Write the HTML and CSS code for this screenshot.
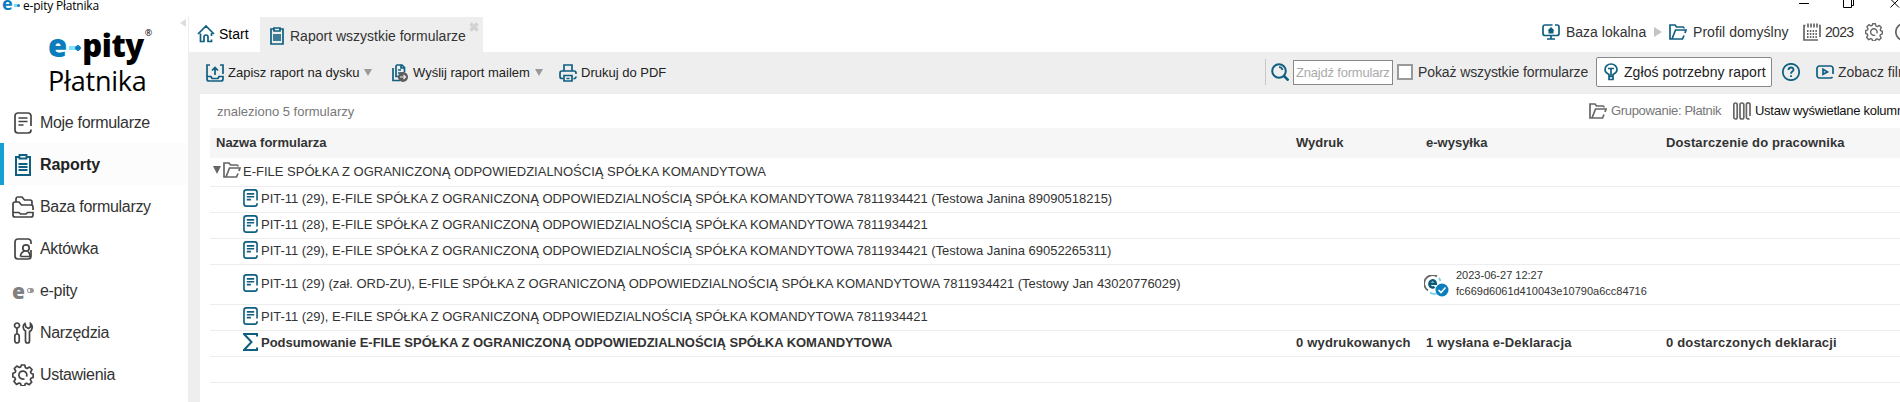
FILE: index.html
```
<!DOCTYPE html>
<html lang="pl">
<head>
  <meta charset="UTF-8">
  <title>e-pity Płatnika</title>
  <link rel="stylesheet" href="styles.css">
</head>
<body>

  <!-- Icon set -->
  <svg class="icon-set" width="0" height="0">
    <symbol id="doc" viewBox="0 0 18 22"><path d="M17 14V4a3 3 0 0 0-3-3H4a3 3 0 0 0-3 3v14a3 3 0 0 0 3 3h10a3 3 0 0 0 3-3v-.5M4.500 6h9M4.500 9.500h9M4.500 13h5"/></symbol>
    <symbol id="clipboard" viewBox="0 0 16 22"><path d="M4.500 3H1v18h14V3h-3.500" stroke-width="2"/><path d="M4.500 1h7v3.500h-7zM3.500 10h9M3.500 13h9M3.500 16h9" stroke-width="1.800"/></symbol>
    <symbol id="folders" viewBox="0 0 22 22"><path d="M1 12V8a2 2 0 0 1 2-2h4l2.500 3H19a2 2 0 0 1 2 2V14M4 6V3a2 2 0 0 1 2-2h4l2.500 3H18a2 2 0 0 1 2 2v3M1 12v7a2 2 0 0 0 2 2h16a2 2 0 0 0 2-2v-2.500h-5.500L14 18H8.500L7 16.500H1"/></symbol>
    <symbol id="person" viewBox="0 0 18 22"><path d="M17 6V4a3 3 0 0 0-3-3H4a3 3 0 0 0-3 3v14a3 3 0 0 0 3 3h10a3 3 0 0 0 3-3v-6"/><circle cx="12" cy="10" r="3.200"/><path d="M6.500 18.500c0-3 1.500-4.500 4-5.500M14 13.500c1.500 1 2 2.500 2 5H6.500"/></symbol>
    <symbol id="tools" viewBox="0 0 20 22"><circle cx="4" cy="3.500" r="2.500"/><path d="M4 6v6"/><rect x="1.800" y="12" width="4.400" height="9" rx="2.200"/><path d="M12 1.500c-2.500 1.500-2.500 6 .5 7.500v10a2 2 0 0 0 4 0V9.500c3.500-1.500 3.500-6 1-8V5l-2 1.500L12.800 5z"/></symbol>
    <symbol id="gear" viewBox="0 0 22 22"><path d="M9.300 1h3.400l.8 2.800 1.500.6 2.500-1.400 2.500 2.500-1.400 2.500.6 1.500 2 .5v3.400l-2.300.8-.6 1.500 1.400 2.500-2.500 2.500-2.500-1.400-1.500.6-.5 2H9.300l-.8-2.300-1.500-.6-2.500 1.400L2 17.500l1.400-2.500-.6-1.500-2-.5V9.300l2.300-.8.6-1.500L2.300 4.500l2.500-2.400 2.500 1.400 1.500-.6z" stroke-linejoin="round"/><path d="M12.500 14.700a4 4 0 1 1 2-2"/></symbol>
    <symbol id="home" viewBox="0 0 18 18"><path d="M1 9l8-8 8 8M3.500 8.500v8h3.500V12q0-2 2-2t2 2v4.500h3.500v-2M14.500 8v3"/></symbol>
    <symbol id="report" viewBox="0 0 14 18"><path d="M4 2H1v15h12V2h-3"/><path d="M4 1h6v3H4z"/><path d="M3 7h8v7H3z" fill="currentColor" fill-opacity=".8" stroke="none"/></symbol>
    <symbol id="save" viewBox="0 0 18 18"><path d="M4 1H1v14a2 2 0 0 0 2 2h12a2 2 0 0 0 2-2v-2.500h-4l-1 2H6l-1-2H1M14 1h3v9M9 11V4M6 6.500l3-3 3 3"/></symbol>
    <symbol id="send" viewBox="0 0 16 18"><path d="M12.500 8V3.500L10 1H5L4 2v10.500h4M9 1v3h3M1 4v12.500h7M6 6h3M6 9h5"/><circle cx="11" cy="13" r="5" fill="#5c5c5c" stroke="none"/><path d="M8 13h5.500M11.500 11l2 2-2 2" stroke="#eee" stroke-width="1.200"/></symbol>
    <symbol id="print" viewBox="0 0 18 18"><path d="M5 7V1h8v6M4 14.500H3a2 2 0 0 1-2-2V9a2 2 0 0 1 2-2h12a2 2 0 0 1 2 2v1M14.500 14.500a2 2 0 0 0 2.500-2M5 11.500h8V17H5zM7.500 14.500h3"/></symbol>
    <symbol id="search" viewBox="0 0 18 18"><circle cx="8" cy="8" r="6.800" stroke-width="2"/><path d="M13 13l4.500 4.500" stroke-width="2.500"/><path d="M8 4q3 .3 3.500 3"/></symbol>
    <symbol id="bulb" viewBox="0 0 14 18"><path d="M5 13v-1.500C3 10.500 1 9.500 1 6.500a6 5.500 0 0 1 12 0c0 3-2 4-4 5V13M4 5.500h6M7 5.500V13M5 13.500h4v3H5z"/></symbol>
    <symbol id="help" viewBox="0 0 18 18"><circle cx="9" cy="9" r="8.200"/><path d="M6.500 7c0-3.300 5-3.300 5-.3 0 2-2.500 1.800-2.500 4M9 12.200V14" stroke-width="1.800"/></symbol>
    <symbol id="video" viewBox="0 0 18 14"><path d="M17 9V3.500A2.500 2.500 0 0 0 14.500 1h-11A2.500 2.500 0 0 0 1 3.500v7A2.500 2.500 0 0 0 3.500 13h11a2.500 2.500 0 0 0 2-1"/><path d="M7 4.300v5L11.500 7z"/></symbol>
    <symbol id="monitor" viewBox="0 0 18 16"><path d="M10.500 1H3a2 2 0 0 0-2 2v6.500a2 2 0 0 0 2 2h12a2 2 0 0 0 2-2V3a2 2 0 0 0-2-2h-2M5 15h8M9 12v3"/><path d="M9 3L5.500 6.500h1V9.500h5v-3h1z" fill="currentColor" stroke="none"/></symbol>
    <symbol id="folder" viewBox="0 0 18 16"><path d="M4 15H1V1H6l1.500 2H14q1 0 1 1.500M3 15L6.500 6H17l-1 3M15 11.500L13.500 15H3"/></symbol>
    <symbol id="calendar" viewBox="0 0 18 18"><path d="M2.500 2.500H1V17h14M17 14V2.500h-1M5 .5v4M8 .5v4M11 .5v4M14 .5v4"/><path d="M4 8h11M4 11h11M4 14h11" stroke-width="2" stroke-dasharray="1.500 1.300"/></symbol>
    <symbol id="columns" viewBox="0 0 18 18"><rect x=".8" y="1" width="3.400" height="16" rx="1.700"/><rect x="7" y="1" width="3.800" height="16" rx="1.700"/><path d="M17 14V2.700a1.800 1.800 0 0 0-3.600 0v12.600a1.800 1.800 0 0 0 3 1.200"/></symbol>
    <symbol id="sum" viewBox="0 0 15 18"><path d="M14 3.500V1H1l7.500 8L1 17h13v-2.500"/></symbol>
  </svg>

  <!-- Title bar -->
  <header class="titlebar">
    <span class="title-logo">e<i></i><b></b></span>
    <span class="title-text">e-pity Płatnika</span>
    <svg class="window-buttons" width="101" height="10" viewBox="0 0 101 10" fill="none" stroke="#000"><path d="M0 3.500h10M45.500-.5h7v8h-8v-8zM52.500 5.500h2v-7M91.500 7.500L100-1M91.500-1L100 7.500"/></svg>
  </header>

  <div class="layout">

    <!-- Sidebar -->
    <nav class="sidebar">
      <span class="collapse"></span>
      <div class="brand">
        <div class="brand-top"><span class="brand-e">e</span><span class="brand-dot"></span><span class="brand-pity">pity</span><sup>®</sup></div>
        <div class="brand-bottom">Płatnika</div>
      </div>
      <a class="menu-item"><svg class="icon" width="18" height="22"><use href="#doc"/></svg>Moje formularze</a>
      <a class="menu-item active"><svg class="icon" width="16" height="22"><use href="#clipboard"/></svg>Raporty</a>
      <a class="menu-item"><svg class="icon" width="22" height="22"><use href="#folders"/></svg>Baza formularzy</a>
      <a class="menu-item"><svg class="icon" width="18" height="22"><use href="#person"/></svg>Aktówka</a>
      <a class="menu-item"><span class="epity-icon">e<i></i></span>e-pity</a>
      <a class="menu-item"><svg class="icon" width="20" height="22"><use href="#tools"/></svg>Narzędzia</a>
      <a class="menu-item"><svg class="icon" width="22" height="22"><use href="#gear"/></svg>Ustawienia</a>
    </nav>

    <main class="main">
      <!-- Tabs -->
      <div class="tabs">
        <a class="tab start"><svg class="icon teal" width="18" height="18"><use href="#home"/></svg>Start</a>
        <a class="tab current"><svg class="icon teal" width="14" height="18"><use href="#report"/></svg>Raport wszystkie formularze<svg class="close" width="10" height="10" viewBox="0 0 10 10"><path d="M1.500 1.500l7 7M8.500 1.500l-7 7" stroke="#d2d2d2" stroke-width="3.400"/></svg></a>
        <div class="context">
          <svg class="icon teal" width="18" height="16"><use href="#monitor"/></svg><span class="c-base">Baza lokalna</span>
          <span class="arrow"></span>
          <svg class="icon teal" width="18" height="16"><use href="#folder"/></svg><span class="c-profile">Profil domyślny</span>
          <svg class="icon grey" width="18" height="18"><use href="#calendar"/></svg><span class="c-year">2023</span>
          <svg class="icon grey" width="18" height="18"><use href="#gear"/></svg>
          <svg class="icon grey c-help" width="18" height="18"><use href="#help"/></svg>
        </div>
      </div>

      <!-- Toolbar -->
      <div class="toolbar">
        <div class="actions">
          <a class="tool save"><svg class="icon teal" width="18" height="18"><use href="#save"/></svg>Zapisz raport na dysku<span class="down"></span></a>
          <a class="tool send"><svg class="icon teal" width="16" height="18"><use href="#send"/></svg>Wyślij raport mailem<span class="down"></span></a>
          <a class="tool print"><svg class="icon teal" width="18" height="18"><use href="#print"/></svg>Drukuj do PDF</a>
        </div>
        <div class="filters">
          <svg class="icon teal" width="18" height="18"><use href="#search"/></svg>
          <div class="search-input">Znajdź formularz</div>
          <span class="checkbox"></span>
          <span class="show-all">Pokaż wszystkie formularze</span>
          <a class="report-btn"><svg class="icon teal" width="14" height="18"><use href="#bulb"/></svg>Zgłoś potrzebny raport</a>
          <svg class="icon teal" width="18" height="18"><use href="#help"/></svg>
          <svg class="icon teal video" width="18" height="14"><use href="#video"/></svg>
          <span class="film">Zobacz film</span>
        </div>
      </div>

      <!-- Report -->
      <section class="content">
        <div class="summary">
          <span class="found">znaleziono 5 formularzy</span>
          <svg class="icon grey" width="18" height="16"><use href="#folder"/></svg><span class="grouping">Grupowanie: Płatnik</span>
          <svg class="icon grey" width="18" height="18"><use href="#columns"/></svg><span class="set-columns">Ustaw wyświetlane kolumny</span>
        </div>

        <div class="table">
          <div class="row head"><span>Nazwa formularza</span><span>Wydruk</span><span>e-wysyłka</span><span>Dostarczenie do pracownika</span></div>
          <div class="row group"><div class="name"><span class="expand"></span><svg class="icon grey" width="18" height="16"><use href="#folder"/></svg>E-FILE SPÓŁKA Z OGRANICZONĄ ODPOWIEDZIALNOŚCIĄ SPÓŁKA KOMANDYTOWA</div></div>
          <div class="row"><div class="name"><svg class="icon teal" width="15" height="18"><use href="#doc"/></svg>PIT-11 (29), E-FILE SPÓŁKA Z OGRANICZONĄ ODPOWIEDZIALNOŚCIĄ SPÓŁKA KOMANDYTOWA 7811934421 (Testowa Janina 89090518215)</div></div>
          <div class="row"><div class="name"><svg class="icon teal" width="15" height="18"><use href="#doc"/></svg>PIT-11 (28), E-FILE SPÓŁKA Z OGRANICZONĄ ODPOWIEDZIALNOŚCIĄ SPÓŁKA KOMANDYTOWA 7811934421</div></div>
          <div class="row"><div class="name"><svg class="icon teal" width="15" height="18"><use href="#doc"/></svg>PIT-11 (29), E-FILE SPÓŁKA Z OGRANICZONĄ ODPOWIEDZIALNOŚCIĄ SPÓŁKA KOMANDYTOWA 7811934421 (Testowa Janina 69052265311)</div></div>
          <div class="row tall"><div class="name"><svg class="icon teal" width="15" height="18"><use href="#doc"/></svg>PIT-11 (29) (zał. ORD-ZU), E-FILE SPÓŁKA Z OGRANICZONĄ ODPOWIEDZIALNOŚCIĄ SPÓŁKA KOMANDYTOWA 7811934421 (Testowy Jan 43020776029)</div>
            <span></span>
            <div class="sent">
              <svg width="25" height="22" viewBox="0 0 25 22" fill="none"><path d="M4 15.500A8.200 8.200 0 0 1 13 1.500" stroke="#666" stroke-width="1.800"/><path d="M6 17.500q4 2.500 8 .5M15 3l1.500 3" stroke="#6fd3ee" stroke-width="1.800"/><path d="M5.500 8.800h6.300a3.200 3.600 0 1 0-1.300 3" stroke="#0c5a78" stroke-width="2.500"/><circle cx="18" cy="15" r="6.500" fill="#0a7dbd"/><path d="M14.500 15l2.500 2.500 4.500-5" stroke="#fff" stroke-width="1.600"/></svg>
              <div class="sent-info"><span>2023-06-27 12:27</span><span>fc669d6061d410043e10790a6cc84716</span></div>
            </div>
          </div>
          <div class="row"><div class="name"><svg class="icon teal" width="15" height="18"><use href="#doc"/></svg>PIT-11 (29), E-FILE SPÓŁKA Z OGRANICZONĄ ODPOWIEDZIALNOŚCIĄ SPÓŁKA KOMANDYTOWA 7811934421</div></div>
          <div class="row total"><div class="name"><svg class="icon teal" width="15" height="18"><use href="#sum"/></svg>Podsumowanie E-FILE SPÓŁKA Z OGRANICZONĄ ODPOWIEDZIALNOŚCIĄ SPÓŁKA KOMANDYTOWA</div><span>0 wydrukowanych</span><span>1 wysłana e-Deklaracja</span><span>0 dostarczonych deklaracji</span></div>
          <div class="row"></div>
        </div>
      </section>
    </main>
  </div>

</body>
</html>
```
FILE: styles.css
```
/* General Styles */
* {
  box-sizing: border-box;
}

body {
  font-family: "Liberation Sans", Arial, sans-serif;
  margin: 0;
  height: 402px;
  overflow: hidden;
  background-color: #fff;
  color: #333;
  font-size: 14px;
  white-space: nowrap;
}

.icon-set {
  position: absolute;
}

.icon {
  flex: none;
  fill: none;
  stroke: currentColor;
  stroke-width: 1.7;
  color: #444;
  overflow: visible;
}

.icon.teal {
  color: #0f5f80;
}

.icon.grey {
  color: #666;
}

/* Title bar */
.titlebar {
  display: flex;
  height: 16px;
  color: #000;
}

.title-logo {
  display: flex;
  align-items: center;
  width: 23px;
  height: 10px;
  padding-left: 2px;
  margin-top: -2px;
  font: bold 18px/10px "Open Sans", sans-serif;
  color: #0a7dbd;
}

.title-logo i {
  width: 3px;
  height: 3px;
  margin: 4px 0 0 1px;
  background-color: #7fdcf5;
}

.title-logo b {
  width: 3px;
  height: 3px;
  margin-top: 4px;
  border-radius: 2px;
  background-color: #0a7dbd;
}

.title-text {
  font: 12px/12px "Open Sans", sans-serif;
  letter-spacing: -0.2px;
}

.window-buttons {
  margin-left: auto;
}

.layout {
  display: flex;
  height: 386px;
}

/* Sidebar */
.sidebar {
  position: relative;
  flex: none;
  width: 189px;
  border-right: 1px solid #eee;
}

.collapse {
  position: absolute;
  right: 2px;
  top: 3px;
  border: 4px solid transparent;
  border-right: 6px solid #ddd;
  border-left: 0;
}

.brand {
  height: 85px;
  padding: 10px 0 0 48px;
  color: #000;
  font-family: "Open Sans", sans-serif;
}

.brand-top {
  display: flex;
  align-items: center;
  height: 38px;
  font-size: 31px;
  font-weight: 800;
  line-height: 38px;
}

.brand-e {
  color: #0a7dbd;
}

.brand-dot {
  width: 12px;
  height: 6px;
  margin: 5px 1px 0 2px;
  background: radial-gradient(circle at 9px 3px, #0a7dbd 2.5px, transparent 3px), linear-gradient(#7fe3fb, #7fe3fb) 0 1px / 7px 4px no-repeat;
}

.brand-pity {
  letter-spacing: -0.4px;
}

.brand-top sup {
  align-self: flex-start;
  margin: -2px 0 0 1px;
  font-size: 9px;
  font-weight: normal;
  line-height: 18px;
}

.brand-bottom {
  font-size: 27px;
  line-height: 34px;
  letter-spacing: -0.2px;
}

.menu-item {
  display: flex;
  align-items: center;
  height: 42px;
  padding-top: 1px;
  font-size: 16px;
  letter-spacing: -0.32px;
}

.menu-item .icon,
.menu-item .epity-icon {
  width: 22px;
  margin: 0 6px 0 12px;
}

.menu-item.active {
  background-color: #fcfcfc;
  border-left: 4px solid #169fd2;
  color: #222;
  font-weight: bold;
  letter-spacing: -0.07px;
}

.menu-item.active .icon {
  margin-left: 8px;
  color: #0f5f80;
}

.epity-icon {
  display: flex;
  align-items: center;
  font: 800 21px/22px "Open Sans", sans-serif;
  color: #808080;
}

.epity-icon i {
  width: 8px;
  height: 5px;
  margin-left: 2px;
  border: 1px solid #999;
  border-right-width: 4px;
  border-radius: 3px;
}

/* Tabs */
.main {
  flex: none;
  width: 1711px;
  overflow: hidden;
  background-color: #eee;
}

.tabs {
  display: flex;
  height: 36px;
  background-color: #fff;
}

.tab {
  display: flex;
  flex: none;
  align-items: center;
}

.tab.start {
  width: 71px;
  padding-left: 8px;
  gap: 4px;
  color: #000;
}

.tab.current {
  width: 223px;
  height: 35px;
  margin-top: 1px;
  padding: 2px 0 0 10px;
  gap: 6px;
  background-color: #eee;
}

.close {
  margin: -18px 0 0 -3px;
}

.context {
  display: flex;
  align-items: center;
  margin-left: 1059px;
  height: 32px;
}

.c-base {
  width: 88px;
  margin-left: 6px;
}

.arrow {
  width: 8px;
  margin-right: 7px;
  border: 5px solid transparent;
  border-left: 8px solid #c4c4c4;
  border-right: 0;
}

.c-profile {
  width: 110px;
  margin-left: 6px;
  letter-spacing: 0.05px;
}

.c-year {
  width: 40px;
  margin-left: 4px;
  letter-spacing: -0.7px;
}

.c-help {
  margin-left: 12px;
}

/* Toolbar */
.toolbar {
  display: flex;
  height: 42px;
}

.actions {
  display: flex;
  flex: none;
  width: 1076px;
  height: 41px;
  padding-left: 17px;
  font-size: 13px;
  color: #222;
}

.tool {
  display: flex;
  align-items: center;
  gap: 4px;
}

.tool.save {
  width: 186px;
}

.tool.send {
  width: 167px;
  gap: 5px;
}

.down {
  border: 4px solid transparent;
  border-top: 7px solid #999;
  border-bottom: 0;
}

.filters {
  display: flex;
  flex: none;
  align-items: center;
  height: 26px;
  margin-top: 7px;
  padding-left: 5px;
  border-left: 1px solid #c8c8c8;
}

.search-input {
  width: 100px;
  height: 25px;
  margin: 0 4px;
  padding-left: 2px;
  border: 1px solid #888;
  background-color: #fff;
  color: #aaa;
  font-size: 13px;
  letter-spacing: -0.2px;
  line-height: 23px;
}

.checkbox {
  width: 16px;
  height: 16px;
  border: 2px solid #999;
  background-color: #fff;
}

.show-all {
  width: 178px;
  margin-left: 5px;
  letter-spacing: -0.1px;
}

.report-btn {
  display: flex;
  align-items: center;
  width: 176px;
  height: 30px;
  margin-right: 10px;
  padding-left: 7px;
  gap: 6px;
  border: 1px solid #888;
  border-radius: 2px;
  background-color: #fff;
  color: #222;
  letter-spacing: 0.07px;
}

.video {
  margin: 0 4px 0 16px;
}

/* Report */
.content {
  height: 308px;
  margin-left: 11px;
  padding-left: 10px;
  background-color: #fff;
}

.summary {
  display: flex;
  align-items: center;
  height: 34px;
  font-size: 13px;
}

.summary .icon,
.summary span {
  flex: none;
}

.found {
  width: 1379px;
  padding-left: 7px;
  color: #777;
}

.grouping {
  width: 122px;
  margin: -1px 0 0 4px;
  color: #777;
  letter-spacing: -0.32px;
}

.set-columns {
  margin: -1px 0 0 4px;
  color: #111;
  letter-spacing: -0.27px;
}

.row {
  display: grid;
  grid-template-columns: 1080px 130px 240px 1fr;
  align-items: center;
  height: 26px;
  padding: 0 0 2px 6px;
  border-bottom: 1px solid #ededed;
  font-size: 13px;
}

.head {
  height: 30px;
  border-bottom: 0;
  background-color: #f6f6f6;
  font-weight: bold;
}

.head span:last-child {
  letter-spacing: 0.12px;
}

.name {
  display: flex;
  align-items: center;
  gap: 3px;
  padding-left: 27px;
  letter-spacing: -0.02px;
}

.name .icon {
  margin-top: -2px;
}

.name .icon.teal {
  stroke-width: 2;
}

.group {
  height: 29px;
}

.group .name {
  gap: 2px;
  padding-left: 0;
  letter-spacing: 0;
}

.expand {
  margin: -3px 0 0 -3px;
  border: 4px solid transparent;
  border-top: 8px solid #666;
  border-bottom: 0;
}

.tall {
  height: 40px;
}

.total {
  font-weight: bold;
  letter-spacing: 0.18px;
}

.sent {
  display: flex;
  align-items: center;
  gap: 7px;
  margin-left: -1px;
}

.sent svg {
  margin: 4px 0 0 -1px;
}

.sent-info {
  display: flex;
  flex-direction: column;
  margin-top: -1px;
  font-size: 11px;
  line-height: 16px;
}
```
